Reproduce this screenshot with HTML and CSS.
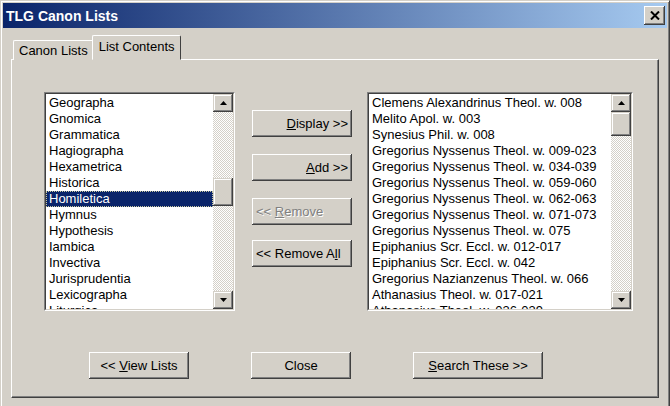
FILE: index.html
```html
<!DOCTYPE html>
<html lang="en">
<head>
<meta charset="UTF-8">
<title>TLG Canon Lists</title>
<link rel="stylesheet" href="styles.css">
</head>
<body>

<div class="window">
    <div class="titlebar">
        <span class="title">TLG Canon Lists</span>
        <span class="close-btn">
            <svg width="10" height="9" viewBox="0 0 10 9"><path d="M1 0.5 L9 8.5 M9 0.5 L1 8.5" stroke="#000" stroke-width="2"/></svg>
        </span>
    </div>

    <div class="client">
        <div class="tabs">
            <div class="tab">Canon Lists</div>
            <div class="tab active">List Contents</div>
        </div>

        <div class="panel">
            <div class="main-row">
                <!-- Left list -->
                <div class="listbox left-list">
                    <div class="listbox-inner">
                        <div class="rows">
                            <div class="row">Geographa</div>
                            <div class="row">Gnomica</div>
                            <div class="row">Grammatica</div>
                            <div class="row">Hagiographa</div>
                            <div class="row">Hexametrica</div>
                            <div class="row">Historica</div>
                            <div class="row selected">Homiletica</div>
                            <div class="row">Hymnus</div>
                            <div class="row">Hypothesis</div>
                            <div class="row">Iambica</div>
                            <div class="row">Invectiva</div>
                            <div class="row">Jurisprudentia</div>
                            <div class="row">Lexicographa</div>
                            <div class="row">Liturgica</div>
                        </div>
                        <div class="scrollbar">
                            <div class="sb-btn"><svg width="7" height="4" viewBox="0 0 7 4"><polygon points="3.5,0 7,4 0,4" fill="#000"/></svg></div>
                            <div class="sb-track">
                                <div class="sb-thumb thumb-mid"></div>
                            </div>
                            <div class="sb-btn"><svg width="7" height="4" viewBox="0 0 7 4"><polygon points="0,0 7,0 3.5,4" fill="#000"/></svg></div>
                        </div>
                    </div>
                </div>

                <!-- Middle buttons -->
                <div class="mid-buttons">
                    <div class="button align-right"><u>D</u>isplay &gt;&gt;</div>
                    <div class="button align-right"><u>A</u>dd &gt;&gt;</div>
                    <div class="button align-left disabled">&lt;&lt; <u>R</u>emove</div>
                    <div class="button align-left last">&lt;&lt; Remove A<u>l</u>l</div>
                </div>

                <!-- Right list -->
                <div class="listbox right-list">
                    <div class="listbox-inner">
                        <div class="rows">
                            <div class="row">Clemens Alexandrinus Theol. w. 008</div>
                            <div class="row">Melito Apol. w. 003</div>
                            <div class="row">Synesius Phil. w. 008</div>
                            <div class="row">Gregorius Nyssenus Theol. w. 009-023</div>
                            <div class="row">Gregorius Nyssenus Theol. w. 034-039</div>
                            <div class="row">Gregorius Nyssenus Theol. w. 059-060</div>
                            <div class="row">Gregorius Nyssenus Theol. w. 062-063</div>
                            <div class="row">Gregorius Nyssenus Theol. w. 071-073</div>
                            <div class="row">Gregorius Nyssenus Theol. w. 075</div>
                            <div class="row">Epiphanius Scr. Eccl. w. 012-017</div>
                            <div class="row">Epiphanius Scr. Eccl. w. 042</div>
                            <div class="row">Gregorius Nazianzenus Theol. w. 066</div>
                            <div class="row">Athanasius Theol. w. 017-021</div>
                            <div class="row">Athanasius Theol. w. 036-039</div>
                        </div>
                        <div class="scrollbar">
                            <div class="sb-btn"><svg width="7" height="4" viewBox="0 0 7 4"><polygon points="3.5,0 7,4 0,4" fill="#000"/></svg></div>
                            <div class="sb-track">
                                <div class="sb-thumb thumb-top"></div>
                            </div>
                            <div class="sb-btn"><svg width="7" height="4" viewBox="0 0 7 4"><polygon points="0,0 7,0 3.5,4" fill="#000"/></svg></div>
                        </div>
                    </div>
                </div>
            </div>

            <!-- Bottom buttons -->
            <div class="bottom-row">
                <div class="button">&lt;&lt; <u>V</u>iew Lists</div>
                <div class="button">Close</div>
                <div class="button wide"><u>S</u>earch These &gt;&gt;</div>
            </div>
        </div>
    </div>
</div>

</body>
</html>
```

FILE: styles.css
```css
body {
    margin: 0;
    background-color: #d4d0c8;
    font-family: "Liberation Sans", Arial, sans-serif;
    font-size: 13px;
    color: #000000;
    overflow: hidden;
}
.window {
    width: 670px;
    height: 410px;
    box-sizing: border-box;
    border: 1px solid;
    border-color: #d4d0c8 #404040 #404040 #d4d0c8;
    box-shadow: inset 1px 1px #ffffff, inset -1px -1px #808080;
    padding: 2px;
}
.titlebar {
    height: 25px;
    display: flex;
    align-items: center;
    justify-content: space-between;
    padding: 0 2px 0 3px;
    background: linear-gradient(to right, #0a246a, #a6caf0);
    color: #ffffff;
    font-weight: bold;
    font-size: 14px;
}
.close-btn {
    width: 21px;
    height: 19px;
    box-sizing: border-box;
    background-color: #d4d0c8;
    display: flex;
    align-items: center;
    justify-content: center;
    box-shadow: inset -1px -1px #404040, inset 1px 1px #ffffff, inset -2px -2px #808080;
}
.client {
    padding: 8px 8px 0 8px;
}
/* Tabs */
.tabs {
    display: flex;
    align-items: flex-end;
    padding-left: 2px;
    height: 24px;
    position: relative;
    z-index: 1;
    margin-bottom: -1px;
}
.tab {
    height: 20px;
    line-height: 20px;
    padding: 0 5px;
    box-sizing: border-box;
    border-top: 1px solid #ffffff;
    border-left: 1px solid #ffffff;
    border-right: 1px solid #404040;
    border-radius: 2px 2px 0 0;
    background-color: #d4d0c8;
    font-size: 13px;
}
.tab.active {
    height: 25px;
    line-height: 21px;
    margin-left: -2px;
    padding: 0 5px 0 6px;
    border-bottom: 1px solid #d4d0c8;
}
.panel {
    height: 339px;
    box-sizing: border-box;
    border: 1px solid;
    border-color: #ffffff #404040 #404040 #ffffff;
    box-shadow: inset -1px -1px #808080;
    padding: 32px 0 0 32px;
}
.main-row {
    display: flex;
    align-items: flex-start;
}
/* List boxes */
.listbox {
    height: 219px;
    box-sizing: border-box;
    border: 1px solid;
    border-color: #808080 #ffffff #ffffff #808080;
}
.left-list { width: 191px; }
.right-list { width: 266px; }
.listbox-inner {
    height: 100%;
    box-sizing: border-box;
    border: 1px solid;
    border-color: #404040 #d4d0c8 #d4d0c8 #404040;
    background-color: #ffffff;
    display: flex;
}
.rows {
    flex: 1;
    overflow: hidden;
    padding-top: 1px;
}
.row {
    height: 16px;
    line-height: 16px;
    padding-left: 3px;
    white-space: nowrap;
}
.row.selected {
    background-color: #0a246a;
    color: #ffffff;
    outline: 1px dotted #c8c8a0;
    outline-offset: -1px;
}
.scrollbar {
    width: 20px;
    display: flex;
    flex-direction: column;
}
.sb-btn {
    height: 18px;
    background-color: #d4d0c8;
    display: flex;
    align-items: center;
    justify-content: center;
    box-shadow: inset -1px -1px #404040, inset 1px 1px #d4d0c8, inset -2px -2px #808080, inset 2px 2px #ffffff;
}
.sb-track {
    flex: 1;
    background-color: #ffffff;
    background-image: conic-gradient(#d4d0c8 25%, transparent 0 50%, #d4d0c8 0 75%, transparent 0);
    background-size: 2px 2px;
}
.sb-thumb {
    background-color: #d4d0c8;
    box-shadow: inset -1px -1px #404040, inset 1px 1px #d4d0c8, inset -2px -2px #808080, inset 2px 2px #ffffff;
}
.thumb-mid { height: 28px; margin-top: 66px; }
.thumb-top { height: 24px; }
/* Buttons */
.mid-buttons {
    display: flex;
    flex-direction: column;
    gap: 17px;
    margin: 18px 15px 0 17px;
}
.mid-buttons .last { margin-top: -2px; }
.button {
    width: 100px;
    height: 27px;
    box-sizing: border-box;
    line-height: 27px;
    text-align: center;
    background-color: #d4d0c8;
    box-shadow: inset -1px -1px #404040, inset 1px 1px #ffffff, inset -2px -2px #808080;
    white-space: nowrap;
}
.button.align-right {
    text-align: right;
    padding-right: 4px;
}
.button.align-left {
    text-align: left;
    padding-left: 4px;
}
.button.disabled {
    color: #808080;
    text-shadow: 1px 1px #ffffff;
}
.button.wide { width: 130px; }
.bottom-row {
    display: flex;
    gap: 62px;
    margin: 41px 0 0 45px;
}
```
